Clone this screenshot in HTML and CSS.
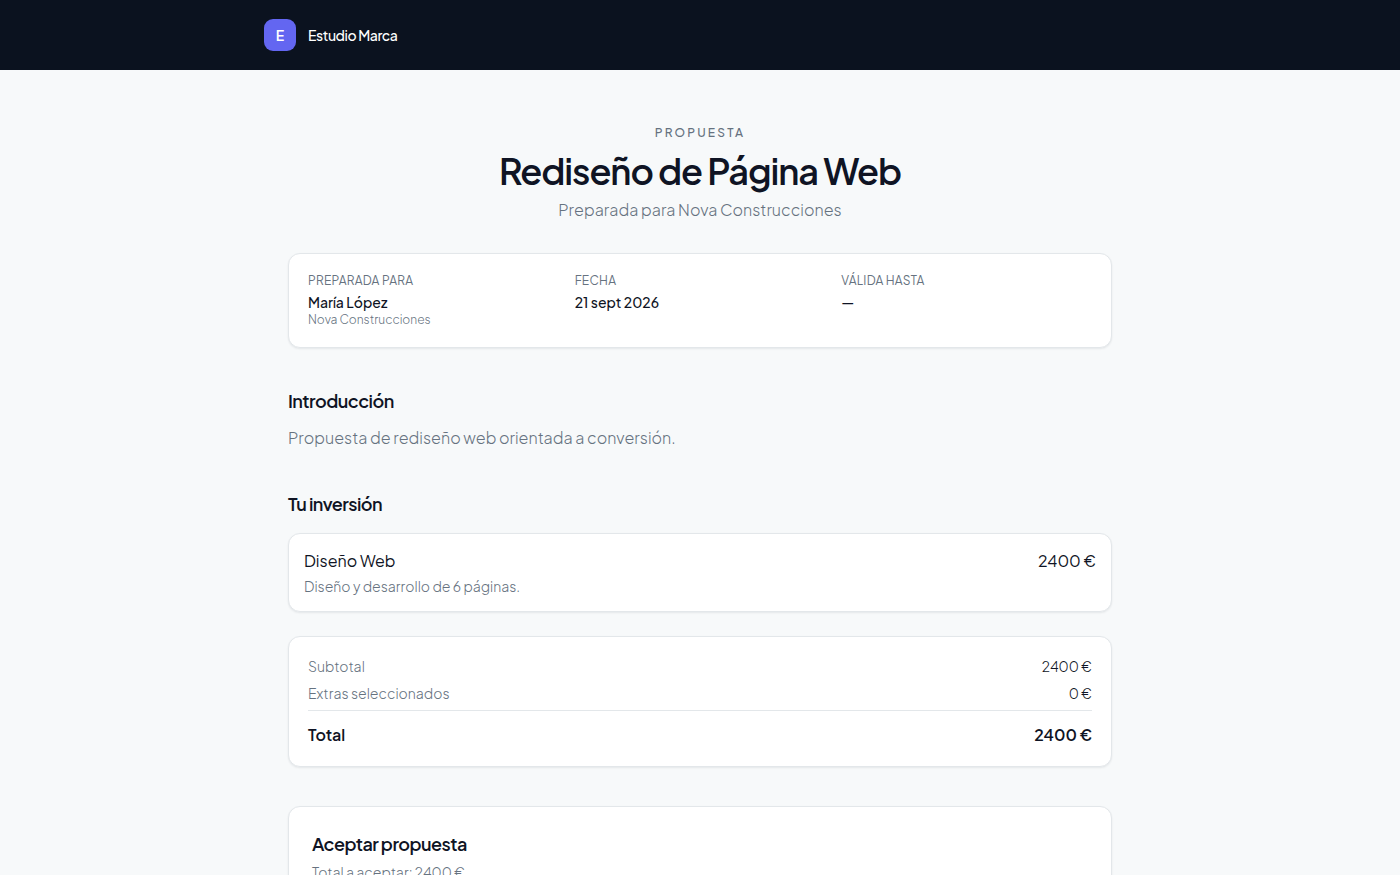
FILE: index.html
```html
<!DOCTYPE html>
<html lang="es">
<head>
    <meta charset="UTF-8">
    <meta name="viewport" content="width=device-width, initial-scale=1.0">
    <title>Rediseño de Página Web</title>
    <link rel="stylesheet" href="styles.css">
</head>
<body>
    <header class="site-header">
        <div class="header-inner">
            <span class="logo">E</span>
            <span class="brand-name">Estudio Marca</span>
        </div>
    </header>

    <main class="proposal">
        <div class="hero">
            <p class="eyebrow">Propuesta</p>
            <h1>Rediseño de Página Web</h1>
            <p class="subtitle">Preparada para Nova Construcciones</p>
        </div>

        <dl class="card details">
            <div>
                <dt>Preparada para</dt>
                <dd>María López</dd>
                <dd class="company">Nova Construcciones</dd>
            </div>
            <div>
                <dt>Fecha</dt>
                <dd>21 sept 2026</dd>
            </div>
            <div>
                <dt>Válida hasta</dt>
                <dd>—</dd>
            </div>
        </dl>

        <section class="section">
            <h2>Introducción</h2>
            <p class="intro-text">Propuesta de rediseño web orientada a conversión.</p>
        </section>

        <section class="section">
            <h2>Tu inversión</h2>
            <div class="card item">
                <div class="item-row">
                    <h3>Diseño Web</h3>
                    <span class="item-price">2400 €</span>
                </div>
                <p class="item-description">Diseño y desarrollo de 6 páginas.</p>
            </div>

            <dl class="card totals">
                <div class="totals-row">
                    <dt>Subtotal</dt>
                    <dd>2400 €</dd>
                </div>
                <div class="totals-row">
                    <dt>Extras seleccionados</dt>
                    <dd>0 €</dd>
                </div>
                <div class="totals-row grand-total">
                    <dt>Total</dt>
                    <dd>2400 €</dd>
                </div>
            </dl>
        </section>

        <section class="card accept">
            <h2>Aceptar propuesta</h2>
            <p>Total a aceptar: 2400 €</p>
        </section>
    </main>
</body>
</html>
```
FILE: styles.css
```css
:root {
    --brand-color: #6366f1;
    --header-color: #0b121f;
    --text-color: #0f1424;
    --muted-color: #667280;
    --border-color: #e3e7ea;
    --bg-color: #f7f9fa;
}

* {
    box-sizing: border-box;
    margin: 0;
}

body {
    font-family: "Plus Jakarta Sans", Inter, sans-serif;
    font-size: 14px;
    font-weight: 300;
    line-height: 20px;
    color: var(--text-color);
    background-color: var(--bg-color);
}

h1,
h2 {
    font-weight: 600;
    letter-spacing: -0.03em;
}

h2 {
    font-size: 18px;
    line-height: 28px;
}

.site-header {
    background-color: var(--header-color);
}

.header-inner {
    display: flex;
    align-items: center;
    gap: 12px;
    max-width: 920px;
    margin: 0 auto;
    padding: 19px 24px;
}

.logo {
    display: flex;
    align-items: center;
    justify-content: center;
    width: 32px;
    height: 32px;
    border-radius: 9px;
    background-color: var(--brand-color);
    color: white;
    font-weight: 600;
}

.brand-name {
    color: white;
    font-weight: 500;
    letter-spacing: -0.03em;
}

.proposal {
    max-width: 872px;
    margin: 0 auto;
    padding: 55px 24px 64px;
}

.hero {
    margin-bottom: 31px;
    text-align: center;
}

.eyebrow {
    font-size: 12px;
    line-height: 16px;
    font-weight: 500;
    letter-spacing: 0.18em;
    text-transform: uppercase;
    color: var(--muted-color);
}

h1 {
    margin-top: 10px;
    font-size: 36px;
    line-height: 40px;
}

.subtitle {
    margin-top: 7px;
    font-size: 16px;
    line-height: 24px;
    color: var(--muted-color);
}

.card {
    background-color: white;
    border: 1px solid var(--border-color);
    border-radius: 12px;
    box-shadow: 0 1px 2px rgba(15, 20, 36, 0.08);
}

.details {
    display: grid;
    grid-template-columns: repeat(3, 1fr);
    gap: 16px;
    padding: 19px;
}

.details dt {
    margin-bottom: 3px;
    font-size: 12px;
    line-height: 16px;
    font-weight: 400;
    letter-spacing: 0.02em;
    text-transform: uppercase;
    color: var(--muted-color);
}

.details dd {
    font-weight: 500;
}

.details .company {
    font-size: 12px;
    line-height: 16px;
    font-weight: 300;
    color: var(--muted-color);
}

.section {
    margin-top: 39px;
}

.intro-text {
    margin-top: 10px;
    font-size: 16px;
    line-height: 26px;
    color: var(--muted-color);
}

.item {
    margin-top: 15px;
    padding: 15px;
}

.item-row {
    display: flex;
    justify-content: space-between;
    gap: 16px;
    font-size: 16px;
    line-height: 24px;
}

.item-row h3 {
    font-size: 16px;
    font-weight: 400;
}

.item-price {
    font-weight: 400;
}

.item-description {
    margin-top: 3px;
    color: var(--muted-color);
}

.totals {
    display: grid;
    gap: 7px;
    margin-top: 24px;
    padding: 19px;
}

.totals-row {
    display: flex;
    justify-content: space-between;
}

.totals-row dt {
    color: var(--muted-color);
}

.grand-total {
    padding-top: 12px;
    border-top: 1px solid var(--border-color);
    font-size: 16px;
    line-height: 24px;
    font-weight: 600;
}

.grand-total dt {
    color: var(--text-color);
}

.accept {
    margin-top: 39px;
    padding: 23px 23px 48px;
}

.accept p {
    margin-top: 4px;
    color: var(--muted-color);
}

@media (max-width: 640px) {
    .details {
        grid-template-columns: 1fr;
    }

    h1 {
        font-size: 30px;
    }
}
```
